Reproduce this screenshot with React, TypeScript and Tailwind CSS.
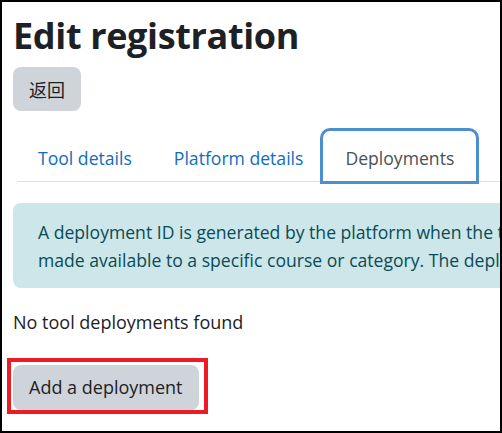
export default function App() {
  return (
    <div className="w-[502px] h-[433px] border-2 border-black bg-white overflow-hidden text-[#1d2125] font-['Open_Sans',sans-serif]">
      <div className="pl-[11px] pt-[12px]">
        {/* Heading */}
        <h1 className="text-[36px] font-bold leading-[44px] tracking-[-0.35px]">Edit registration</h1>

        {/* Back button */}
        <div className="mt-[9px]">
          <button className="h-[44px] px-[16px] rounded-[8px] bg-[#ced4da] text-[18px] text-[#1d2125] font-['Noto_Sans_CJK_SC',sans-serif]">
            返回
          </button>
        </div>

        {/* Tabs */}
        <div className="mt-[17px] ml-[4px] flex items-end border-b border-[#dee2e6] whitespace-nowrap">
          <a className="px-[21px] h-[53px] pt-[7px] flex items-center text-[17.6px] text-[#0f6cbf]">Tool details</a>
          <a className="px-[21px] h-[53px] pt-[7px] flex items-center text-[17.6px] text-[#0f6cbf]">Platform details</a>
          <a className="-ml-[4px] -mb-[3px] px-[22px] h-[56px] pt-[4px] flex items-center text-[17.6px] text-[#495057] bg-white border-[3px] border-[#4a8fd0] rounded-t-[10px]">
            Deployments
          </a>
        </div>

        {/* Info alert */}
        <div className="mt-[21px] w-[560px] rounded-[8px] bg-[#cce6ea] text-[#0b4b54] px-[25px] pt-[15px] pb-[14px] text-[17.6px] leading-[28px] whitespace-nowrap">
          <p>A deployment ID is generated by the platform when the tool is</p>
          <p>made available to a specific course or category. The deployment ID</p>
        </div>

        {/* Empty state */}
        <p className="mt-[20px] text-[18px] leading-[28px]">No tool deployments found</p>

        {/* Add button with highlight */}
        <div className="mt-[22px] -ml-[6px] inline-block border-4 border-[#ed1c24] pl-[2px] pt-[3px] pr-[5px]">
          <button className="h-[45px] px-[16px] rounded-[8px] bg-[#ced4da] text-[18px] text-[#1d2125]">
            Add a deployment
          </button>
        </div>
      </div>
    </div>
  )
}
